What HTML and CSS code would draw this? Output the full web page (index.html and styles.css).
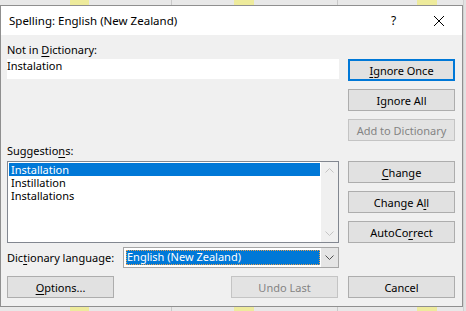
FILE: index.html
```html
<!DOCTYPE html>
<html lang="en">
<head>
  <meta charset="UTF-8" />
  <title>Spelling: English (New Zealand)</title>
  <link rel="stylesheet" href="styles.css">
</head>
<body>
  <div class="dialog" role="dialog" aria-label="Spelling: English (New Zealand)">
    <div class="titlebar">
      <span class="title">Spelling: English (New Zealand)</span>
      <span class="title-btn help">?</span>
      <span class="title-btn close">
        <svg width="10" height="10" viewBox="0 0 10 10"><path d="M0 0L10 10M10 0L0 10" stroke="#000" stroke-width="1"/></svg>
      </span>
    </div>

    <div class="content">
      <div class="main">
        <div class="left">
          <div class="lbl first">Not in <u>D</u>ictionary:</div>
          <div class="word">Instalation</div>

          <div class="lbl sugg">Suggestio<u>n</u>s:</div>
          <div class="list">
            <ul class="items">
              <li class="selected">Installation</li>
              <li>Instillation</li>
              <li>Installations</li>
            </ul>
            <div class="scroll">
              <span class="arrow">
                <svg width="9" height="5" viewBox="0 0 9 5"><path d="M0.5 4.5L4.5 0.5L8.5 4.5" fill="none" stroke="#c4c4c4"/></svg>
              </span>
              <span class="arrow">
                <svg width="9" height="5" viewBox="0 0 9 5"><path d="M0.5 0.5L4.5 4.5L8.5 0.5" fill="none" stroke="#c4c4c4"/></svg>
              </span>
            </div>
          </div>

          <div class="lang-row">
            <span class="lang-lbl">Dic<u>t</u>ionary language:</span>
            <div class="combo">
              <span class="combo-value"><span class="combo-sel">English (New Zealand)</span></span>
              <span class="combo-btn">
                <svg width="9" height="5" viewBox="0 0 9 5"><path d="M0.5 0.5L4.5 4.5L8.5 0.5" fill="none" stroke="#505050"/></svg>
              </span>
            </div>
          </div>
        </div>

        <div class="right">
          <button class="btn focused"><u>I</u>gnore Once</button>
          <button class="btn">I<u>g</u>nore All</button>
          <button class="btn" disabled>Add to Dictionary</button>

          <button class="btn group-start"><u>C</u>hange</button>
          <button class="btn">Change A<u>l</u>l</button>
          <button class="btn">AutoCo<u>r</u>rect</button>
        </div>
      </div>

      <div class="footer">
        <button class="btn"><u>O</u>ptions...</button>
        <button class="btn push" disabled>Undo Last</button>
        <button class="btn">Cancel</button>
      </div>
    </div>
  </div>
</body>
</html>
```

FILE: styles.css
```css
/* Reset and base */
* {
  box-sizing: border-box;
  margin: 0;
  padding: 0;
}
html, body {
  height: 100%;
}
body {
  font-family: "Noto Sans", "Liberation Sans", sans-serif;
  font-size: 11px;
  color: #000;
  padding-top: 5px;
  overflow: hidden;
  /* spreadsheet peeking out behind the dialog */
  background: linear-gradient(90deg,
    #e8e8e8 0 70px, #eeeb9c 70px 89px, #e8e8e8 89px 171px,
    #c9c9c9 171px 172px, #e8e8e8 172px 234px, #eeeb9c 234px 254px,
    #e8e8e8 254px 337px, #c9c9c9 337px 338px, #e8e8e8 338px 417px,
    #eeeb9c 417px 437px, #e8e8e8 437px 463px, #d0d0d0 463px 464px, #e2e2e2 464px);
}
u {
  text-underline-offset: 2px;
}

/* Dialog frame */
.dialog {
  width: 463px;
  border: 1px solid #8f8f8f;
  background: #f0f0f0;
}
.titlebar {
  display: flex;
  align-items: center;
  height: 29px;
  background: #fff;
  padding-left: 8px;
}
.title {
  font-size: 11.5px;
  flex: 1;
}
.title-btn {
  display: flex;
  align-items: center;
  justify-content: center;
  height: 29px;
}
.help {
  width: 45px;
  font-size: 12px;
}
.close {
  width: 46px;
}

/* Body */
.content {
  display: flex;
  flex-direction: column;
}
.main {
  display: flex;
  gap: 9px;
  padding: 0 7px 0 6px;
}
.left {
  width: 332px;
  display: flex;
  flex-direction: column;
}
.right {
  width: 107px;
  display: flex;
  flex-direction: column;
  padding-top: 24px;
}

.lbl {
  line-height: 18px;
  height: 18px;
}
.lbl.first {
  margin-top: 6px;
}
.lbl.sugg {
  margin-top: 63px;
}
.word {
  height: 20px;
  line-height: 14px;
  background: #fff;
}

/* Suggestions list */
.list {
  display: flex;
  height: 82px;
  margin-top: 1px;
  border: 1px solid #828790;
  background: #fff;
}
.items {
  list-style: none;
  flex: 1;
  padding: 1px 1px 0 1px;
}
.items li {
  line-height: 13px;
  height: 13px;
  padding-left: 2px;
}
.items li.selected {
  background: #0078d7;
  color: #fff;
}
.scroll {
  width: 17px;
  background: #f0f0f0;
  display: flex;
  flex-direction: column;
  justify-content: space-between;
}
.arrow {
  display: flex;
  align-items: center;
  justify-content: center;
  height: 17px;
}

/* Dictionary language */
.lang-row {
  display: flex;
  align-items: center;
  margin-top: 4px;
  height: 21px;
}
.lang-lbl {
  width: 116px;
}
.combo {
  display: flex;
  width: 216px;
  height: 21px;
  border: 1px solid #a6a6a6;
  background: #fff;
}
.combo-value {
  flex: 1;
  padding: 2px 1px 2px 2px;
  display: flex;
}
.combo-sel {
  flex: 1;
  background: #0078d7;
  color: #fff;
  line-height: 13px;
  padding-left: 1px;
  outline: 1px dotted #e8a050;
  outline-offset: -1px;
}
.combo-btn {
  width: 17px;
  display: flex;
  align-items: center;
  justify-content: center;
  background: #e5e5e5;
}

/* Buttons */
.btn {
  width: 107px;
  height: 22px;
  margin-bottom: 8px;
  font: inherit;
  color: #000;
  background: #e1e1e1;
  border: 1px solid #adadad;
  text-align: center;
}
.btn.focused {
  border: 2px solid #0078d7;
}
.btn:disabled {
  color: #838383;
  border-color: #c4c4c4;
  background: #e3e3e3;
}
.btn.group-start {
  margin-top: 12px;
}

.footer {
  display: flex;
  gap: 10px;
  padding: 0 7px 0 6px;
  margin-top: 8px;
}
.footer .btn {
  margin-bottom: 8px;
}
.footer .push {
  margin-left: auto;
}
```
